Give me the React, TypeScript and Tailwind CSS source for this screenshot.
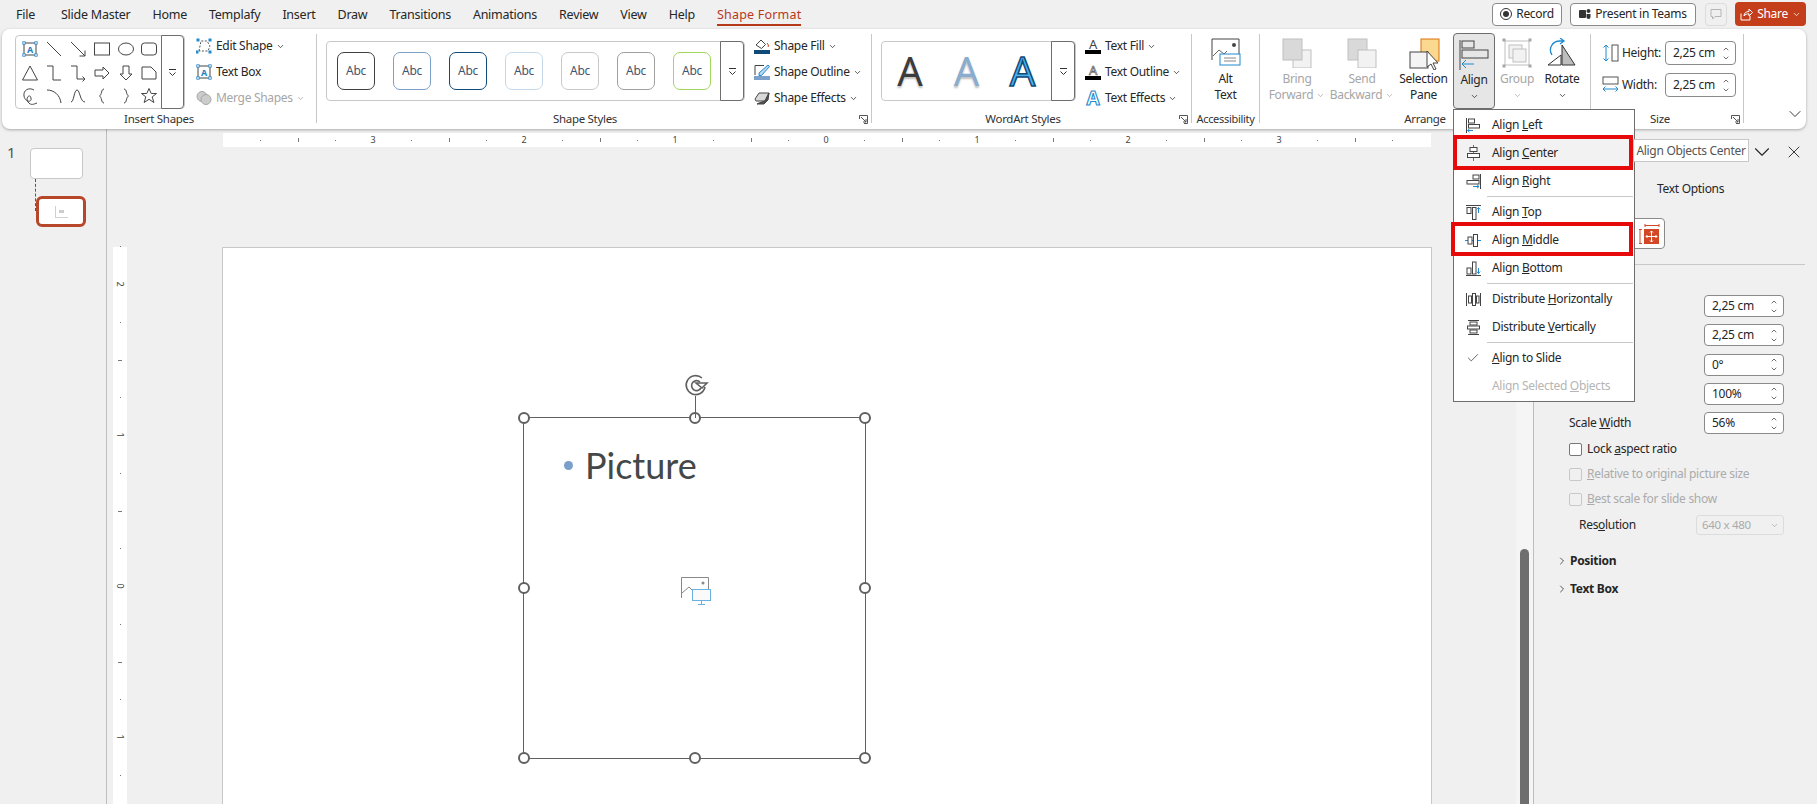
import { ChevronDown, ChevronRight, ChevronUp, Check, X } from 'lucide-react';
import type { ReactNode } from 'react';

const tabs = ['Slide Master', 'Home', 'Templafy', 'Insert', 'Draw', 'Transitions', 'Animations', 'Review', 'View', 'Help'];

const Small = ({ className = '' }: { className?: string }) => (
  <ChevronDown size={9} strokeWidth={2} className={`shrink-0 ${className}`} />
);

// shape gallery glyphs, 18x18 box
const shapes: ReactNode[] = [
  <g key="tb">
    <rect x="3" y="3" width="12" height="12" fill="none" stroke="#444" />
    <text x="9" y="13" fontSize="9" fontWeight="700" textAnchor="middle" fill="#1f7fc4" stroke="none">A</text>
    {[[3, 3], [15, 3], [3, 15], [15, 15]].map(([x, y]) => (
      <rect key={`${x}${y}`} x={x - 1.2} y={y - 1.2} width="2.4" height="2.4" fill="#fff" stroke="#1f7fc4" strokeWidth=".8" />
    ))}
  </g>,
  <path key="l" d="M2 2l14 14" />,
  <path key="a" d="M2 2l14 14M16 10.5V16h-5.5" />,
  <rect key="r" x="1.5" y="3" width="15" height="12" />,
  <ellipse key="e" cx="9" cy="9" rx="7.5" ry="6" />,
  <rect key="rr" x="1.5" y="3" width="15" height="12" rx="3" />,
  <path key="t" d="M9 2L1.5 16h15z" />,
  <path key="c" d="M2 2h6v14h8" />,
  <path key="ca" d="M2 2h6v13h8M13.5 12.5L16 15l-2.500 2.500" />,
  <path key="ra" d="M2 6h8V3l6 6-6 6v-3H2z" />,
  <path key="da" d="M6 2h6v8h3l-6 6-6-6h3z" />,
  <path key="sn" d="M2 3h9l5 5v7H2V3z" />,
  <path key="f" d="M13 3C8 0 2 3 3 9s8 7 7 2-6 0-3 4 6 2 9 1" />,
  <path key="ar" d="M2 3c7 0 13 5 14 13" />,
  <path key="s" d="M2 15C5 15 5 3 8 3s3 12 8 12" />,
  <path key="lb" d="M11 2C8 2 9 8 6.500 9 9 10 8 16 11 16" />,
  <path key="rb" d="M7 2c3 0 2 6 4.500 7C9 10 10 16 7 16" />,
  <path key="st" d="M9 1.500l2.200 5h5.300l-4.300 3.400 1.700 5.600L9 12.300l-4.900 3.200 1.700-5.600L1.500 6.500h5.300z" />,
];

const Group = ({ width, label, launcher, children, labelClass = '' }: { width: string; label: string; launcher?: boolean; children: ReactNode; labelClass?: string }) => (
  <>
    <div className={`flex flex-col pt-[6px] h-full shrink-0 ${width}`}>
      <div className="flex h-[76px] items-start">{children}</div>
      <div className={`relative h-[16px] leading-[16px] text-center text-[11.5px] text-[#333] ${labelClass}`}>
        {label}
        {launcher && (
          <svg width="9" height="9" viewBox="0 0 9 9" className="absolute right-[3px] top-[4px]" fill="none" stroke="#555">
            <path d="M.5 4V.5H8.500V8.500H5M2 2l5 5M7 4v3H4" />
          </svg>
        )}
      </div>
    </div>
    <div className="w-px h-[89px] mt-[5px] bg-[#c8c8c8] shrink-0" />
  </>
);

const MoreBtn = ({ width }: { width: string }) => (
  <div className={`flex items-center justify-center self-stretch -my-px border border-[#6e6e6e] rounded-r-[4px] bg-white ${width}`}>
    <svg width="9" height="9" viewBox="0 0 9 9" fill="none" stroke="#333">
      <path d="M1 1.500h7M1.500 4.500L4.500 7.500 7.500 4.500" />
    </svg>
  </div>
);

const CmdRow = ({ icon, label, disabled, caret = true }: { icon: ReactNode; label: string; disabled?: boolean; caret?: boolean }) => (
  <div className={`flex items-center h-[22px] ${disabled ? 'text-[#a6a6a6]' : 'text-[#262626]'}`}>
    <span className="w-[16px] h-[16px] mr-[4px] shrink-0">{icon}</span>
    <span className="whitespace-nowrap">{label}</span>
    {caret && <Small className="ml-[3px]" />}
  </div>
);

const BigBtn = ({ width, icon, lines, disabled, caret, active }: { width: string; icon: ReactNode; lines: ReactNode[]; disabled?: boolean; caret?: boolean; active?: boolean }) => (
  <div className={`flex flex-col items-center h-[76px] -mt-[2px] pt-[5px] shrink-0 leading-[16px] whitespace-nowrap rounded-[4px] ${width} ${disabled ? 'text-[#a6a6a6]' : 'text-[#262626]'} ${active ? 'bg-[#e6e6e6] border border-[#6e6e6e] pt-[4px]' : ''}`}>
    <div className="w-[30px] h-[28px] mb-[5px]">{icon}</div>
    {lines.map((line, i) => (
      <div key={i} className="flex items-center h-[16px]">{line}</div>
    ))}
    {caret && <div className="flex items-center h-[16px]"><Small /></div>}
  </div>
);

const Spin = ({ value, className = '' }: { value: string; className?: string }) => (
  <div className={`flex items-center justify-between h-[22px] border border-[#8a8a8a] rounded-[4px] bg-white pl-[7px] pr-[5px] text-[#262626] ${className}`}>
    <span>{value}</span>
    <span className="flex flex-col">
      <ChevronUp size={8} strokeWidth={2} />
      <ChevronDown size={8} strokeWidth={2} className="mt-[1px]" />
    </span>
  </div>
);

const I = ({ children }: { children: ReactNode }) => (
  <svg width="16" height="16" viewBox="0 0 16 16" fill="none" stroke="#444">{children}</svg>
);

const blue = '#1f8ad0';

const alignIcons: Record<string, ReactNode> = {
  left: <><path d="M1.500 1v15" stroke="#444" /><rect x="3.500" y="2" width="6" height="4" /><rect x="3.500" y="7.500" width="11" height="3.500" /><path d="M8 13.500H2.500M4.500 11.800l-2 1.700 2 1.700" stroke={blue} /></>,
  center: <><path d="M8.500 0v16" stroke={blue} /><rect x="5" y="2.500" width="7" height="4" fill="#fff" /><rect x="2.500" y="8.500" width="12" height="4" fill="#fff" /></>,
  right: <><path d="M15.500 1v15" stroke="#444" /><rect x="8" y="2" width="6" height="4" /><rect x="2" y="7.500" width="12" height="3.500" /><path d="M8 13.500h6M12 11.800l2 1.700-2 1.700" stroke={blue} /></>,
  top: <><path d="M1 1.500h15" /><rect x="2" y="3.500" width="4" height="6" /><rect x="7.500" y="3.500" width="3.500" height="12" /><path d="M13.500 9V3.500M11.800 5.500l1.700-2 1.700 2" stroke={blue} /></>,
  middle: <><path d="M0 8.500h16" stroke={blue} /><rect x="3" y="5" width="4" height="7" fill="#fff" /><rect x="8.500" y="2.500" width="4" height="12" fill="#fff" /></>,
  bottom: <><path d="M1 15.500h15" /><rect x="2" y="8" width="4" height="6" /><rect x="7.500" y="2" width="3.500" height="12" /><path d="M13.500 8v5.500M11.800 11.500l1.700 2 1.700-2" stroke={blue} /></>,
  dh: <><path d="M1.500 2v13M15.500 2v13" /><rect x="3.500" y="5" width="3" height="7" /><rect x="7.500" y="2.500" width="3" height="12" /><rect x="11.500" y="5" width="2.500" height="7" /></>,
  dv: <><path d="M3 1.500h11M3 15.500h11" /><rect x="5" y="3" width="7" height="3" /><rect x="2.500" y="7" width="12" height="3" /><rect x="5" y="11" width="7" height="3" /></>,
};

const menu: { icon?: string; label: ReactNode; sep?: boolean; checked?: boolean; disabled?: boolean; hover?: boolean }[] = [
  { icon: 'left', label: <>Align <u>L</u>eft</> },
  { icon: 'center', label: <>Align <u>C</u>enter</>, hover: true },
  { icon: 'right', label: <>Align <u>R</u>ight</>, sep: true },
  { icon: 'top', label: <>Align <u>T</u>op</> },
  { icon: 'middle', label: <>Align <u>M</u>iddle</> },
  { icon: 'bottom', label: <>Align <u>B</u>ottom</>, sep: true },
  { icon: 'dh', label: <>Distribute <u>H</u>orizontally</> },
  { icon: 'dv', label: <>Distribute <u>V</u>ertically</>, sep: true },
  { checked: true, label: <><u>A</u>lign to Slide</> },
  { disabled: true, label: <>Align Selected <u>O</u>bjects</> },
];

const abcColors = ['#404040', '#7ba0c9', '#0f4a78', '#c5d9ea', '#c9c9c9', '#a0a0a0', '#a3d65c'];

const rulerNums = [-3, -2, -1, 0, 1, 2, 3];
const rulerTicks = Array.from({ length: 33 }, (_, i) => (i - 16) / 4).filter((v) => v % 1 !== 0);

function TopRuler() {
  return (
    <div className="relative ml-[115px] w-[1208px] h-[14px] bg-white shrink-0 text-[9px] text-[#444]">
      {rulerNums.map((n) => (
        <span key={n} className="absolute top-0 leading-[14px] -translate-x-1/2" style={{ left: 603 + n * 151 }}>{Math.abs(n)}</span>
      ))}
      {rulerTicks.filter((v) => Math.abs(v) < 4).map((v) => (
        <span key={v} className={`absolute w-px bg-[#777] ${v % 0.5 === 0 ? 'top-[5px] h-[4px]' : 'top-[7px] h-[1px]'}`} style={{ left: 603 + v * 151 }} />
      ))}
    </div>
  );
}

function LeftRuler() {
  return (
    <div className="relative ml-[5px] w-[14px] h-[600px] bg-white shrink-0 text-[9px] text-[#444]">
      {[-2, -1, 0, 1].map((n) => (
        <span key={n} className="absolute left-0 w-[14px] text-center leading-[12px] -translate-y-1/2 rotate-90" style={{ top: 339 + n * 151 }}>{Math.abs(n)}</span>
      ))}
      {rulerTicks.filter((v) => v > -2.3 && v < 2).map((v) => (
        <span key={v} className={`absolute h-px bg-[#777] ${v % 0.5 === 0 ? 'left-[5px] w-[4px]' : 'left-[7px] w-[1px]'}`} style={{ top: 339 + v * 151 }} />
      ))}
    </div>
  );
}

const handles = [
  [0, 0], [50, 0], [100, 0],
  [0, 50], [100, 50],
  [0, 100], [50, 100], [100, 100],
];

function SlideCanvas() {
  return (
    <div className="relative ml-[95px] w-[1210px] h-[600px] bg-white border border-[#c8c8c8]">
      <div className="absolute left-[300px] top-[169px] w-[343px] h-[342px] border-[1.5px] border-[#606060]">
        <span className="absolute left-[40px] top-[43px] w-[9px] h-[9px] rounded-full bg-[#7a9fc8]" />
        <span className="absolute left-[61px] top-[20px] text-[36px] leading-[54px] tracking-normal text-[#444848] font-['Lato',sans-serif]">Picture</span>
        <svg className="absolute left-[157px] top-[159px]" width="31" height="28" viewBox="0 0 31 28" fill="none">
          <path d="M.5 21V.5h27V12M1 16l7-6 7 7" stroke="#888" />
          <circle cx="22" cy="6" r="1.500" fill="#888" />
          <rect x="11.500" y="12.500" width="18" height="11" fill="#fafafa" stroke="#68b1e0" />
          <path d="M20.500 24v3M17 27.500h7" stroke="#68b1e0" />
        </svg>
        {handles.map(([x, y]) => (
          <span
            key={`${x}-${y}`}
            className="absolute w-[12px] h-[12px] -translate-x-1/2 -translate-y-1/2 rounded-full bg-white border-2 border-[#606060]"
            style={{ left: `${x}%`, top: `${y}%` }}
          />
        ))}
        <span className="absolute left-1/2 -top-[22px] w-[1.5px] h-[22px] bg-[#606060]" />
        <svg className="absolute left-[159px] -top-[45px]" width="28" height="24" viewBox="0 0 28 24" fill="none" stroke="#606060" strokeWidth="1.600">
          <path d="M22 14A9.500 9.500 0 1 1 19 5" />
          <path d="M18 15a5 5 0 1 1-1-6" />
          <path d="M13 10h11l-5 5z" fill="#fff" />
        </svg>
      </div>
    </div>
  );
}

function FormatPanel() {
  // labels of the first four rows sit behind the open Align menu
  const rows = ['2,25 cm', '2,25 cm', '0°', '100%'];
  return (
    <div className="w-[284px] shrink-0 border-l border-[#bdbdbd] text-[#262626]">
      <div className="flex justify-end items-center h-[22px] mt-[12px] pr-[13px] gap-[9px]">
        <ChevronDown size={26} strokeWidth={1} />
        <X size={20} strokeWidth={1.100} />
      </div>
      <div className="ml-[123px] mt-[18px] leading-[16px] whitespace-nowrap">Text Options</div>
      <div className="flex ml-[100px] mt-[21px] w-[31px] h-[31px] items-center justify-center border border-[#8a8a8a] rounded-r-[4px] bg-white">
        <svg width="21" height="20" viewBox="0 0 21 20" fill="none">
          <path d="M6 1.500h14M6 0v3M20 0v3M1 6v13M0 5.500h3M0 19.500h3" stroke="#d24726" />
          <rect x="5" y="5" width="15" height="15" fill="#d24726" />
          <path d="M12.500 7v11M7 12.500h11M12.500 7l-1.500 1.500M12.500 7l1.500 1.500M12.500 18l-1.500-1.500M12.500 18l1.500-1.500M7 12.500L8.500 11M7 12.500L8.500 14M18 12.500L16.500 11M18 12.500L16.500 14" stroke="#fff" />
        </svg>
      </div>
      <div className="relative h-px mt-[15px] ml-[1px] mr-[12px] bg-[#c8c8c8]" />
      <div className="mt-[30px] flex flex-col gap-[7.250px]">
        {rows.map((value, i) => (
          <div key={i} className="flex items-center justify-end pr-[33px] h-[22px]">
            <Spin value={value} className="w-[80px]" />
          </div>
        ))}
        <div className="flex items-center justify-between pl-[35px] pr-[33px] h-[22px]">
          <span>Scale <u>W</u>idth</span>
          <Spin value="56%" className="w-[80px]" />
        </div>
      </div>
      <div className="flex items-center pl-[35px] h-[14px] mt-[8px] gap-[5px]">
        <span className="w-[13px] h-[13px] bg-white border border-[#777] rounded-[2px]" />
        <span>Lock <u>a</u>spect ratio</span>
      </div>
      <div className="flex items-center pl-[35px] h-[14px] mt-[11px] gap-[5px] text-[#ababab]">
        <span className="w-[13px] h-[13px] border border-[#c8c8c8] rounded-[2px]" />
        <span><u>R</u>elative to original picture size</span>
      </div>
      <div className="flex items-center pl-[35px] h-[14px] mt-[11px] gap-[5px] text-[#ababab]">
        <span className="w-[13px] h-[13px] border border-[#c8c8c8] rounded-[2px]" />
        <span><u>B</u>est scale for slide show</span>
      </div>
      <div className="flex items-center justify-between pl-[45px] pr-[33px] h-[20px] mt-[9px]">
        <span>Res<u>o</u>lution</span>
        <div className="flex items-center justify-between w-[88px] h-[20px] pl-[5px] pr-[4px] border border-[#dcdcdc] rounded-[3px] text-[#ababab] text-[11.500px]">
          640 x 480
          <Small />
        </div>
      </div>
      <div className="flex items-center h-[16px] pl-[22px] mt-[18px] font-bold">
        <ChevronRight size={12} strokeWidth={1.500} className="mr-[2px]" />
        Position
      </div>
      <div className="flex items-center h-[16px] pl-[22px] mt-[12px] font-bold">
        <ChevronRight size={12} strokeWidth={1.500} className="mr-[2px]" />
        Text Box
      </div>
    </div>
  );
}

function AlignMenu() {
  return (
    <div className="absolute left-[1453px] top-[109px] w-[182px] h-[293px] bg-white border border-[#6e6e6e] text-[#262626] z-20 pt-[1px]">
      {menu.map((m, i) => (
        <div key={i}>
          <div className={`flex items-center h-[28px] ${m.hover ? 'bg-[#f2f2f2]' : ''} ${m.disabled ? 'text-[#b5b5b5]' : ''}`}>
            <span className="flex justify-center items-center w-[38px] shrink-0">
              {m.icon && <I>{alignIcons[m.icon]}</I>}
              {m.checked && <Check size={14} strokeWidth={1.200} />}
            </span>
            <span className="whitespace-nowrap">{m.label}</span>
          </div>
          {m.sep && (
            <div className="ml-[33px] mr-[1px] h-[3px] flex items-center">
              <div className="h-px w-full bg-[#c8c8c8]" />
            </div>
          )}
        </div>
      ))}
      <div className="absolute -left-[1px] top-[25px] w-[180px] h-[35px] border-[4px] border-[#e60a0a]" />
      <div className="absolute -left-[3px] top-[112px] w-[182px] h-[34px] border-[4px] border-[#e60a0a]" />
    </div>
  );
}

export default function App() {
  return (
    <div className="relative w-[1817px] h-[804px] overflow-hidden bg-[#f0f0f0] text-[12px] tracking-[-0.3px] text-[#262626] font-['Noto_Sans',sans-serif]">
      {/* tab row */}
      <div className="flex items-start h-[29px]">
        <div className="flex pl-[16px] gap-[22px] h-[30px] items-center text-[12.500px] tracking-[-0.25px]">
          <span className="mr-[4px]">File</span>
          {tabs.map((t) => <span key={t}>{t}</span>)}
          <span className="relative text-[#b7391c] tracking-[0.2px]">
            Shape Format
            <span className="absolute left-0 right-0 -bottom-[2px] h-[2px] bg-[#b7391c]" />
          </span>
        </div>
        <div className="ml-auto flex items-center gap-[8px] pr-[11px] pt-[2px]">
          <div className="flex items-center h-[23px] w-[70px] justify-center border border-[#8a8a8a] rounded-[4px] bg-white gap-[4px]">
            <span className="flex items-center justify-center w-[12px] h-[12px] rounded-full border border-[#333]"><span className="w-[6px] h-[6px] rounded-full bg-[#333]" /></span>
            Record
          </div>
          <div className="flex items-center h-[23px] w-[126px] justify-center border border-[#8a8a8a] rounded-[4px] bg-white gap-[4px] whitespace-nowrap">
            <svg width="12" height="12" viewBox="0 0 12 12">
              <rect x="0" y="2" width="7" height="8" rx="1" fill="#333" />
              <circle cx="9.500" cy="3" r="2" fill="#333" />
              <path d="M7.500 6h4v3a2 2 0 0 1-4 0z" fill="#333" />
            </svg>
            Present in Teams
          </div>
          <div className="flex items-center justify-center h-[23px] w-[22px] ml-[1px] border border-[#dcdcdc] rounded-[4px]">
            <svg width="12" height="12" viewBox="0 0 12 12" fill="none" stroke="#b5b5b5"><path d="M1 1.500h10v7H5l-2.500 2.500V8.500H1z" /></svg>
          </div>
          <div className="flex items-center justify-center h-[24px] w-[71px] rounded-[4px] bg-[#c43e1c] text-white gap-[4px]">
            <svg width="13" height="13" viewBox="0 0 13 13" fill="none" stroke="#fff"><path d="M1 5.500V12h9V8M4 8c0-3 2-4.500 5-4.500V1l3.500 3.500L9 8V5.800C7 5.800 5 6.500 4 8z" /></svg>
            Share
            <Small />
          </div>
        </div>
      </div>

      {/* ribbon */}
      <div className="flex ml-[2px] w-[1804px] h-[100px] bg-white rounded-[8px] shadow-[0_1px_3px_rgba(0,0,0,0.3)] relative z-10">
        <Group width="w-[314px]" label="Insert Shapes">
          <div className="flex ml-[13px] h-[74px] w-[170px] border border-[#c8c8c8] rounded-[4px] bg-white">
            <div className="grid grid-cols-6 grid-rows-3 w-[147px] pl-[2px] pt-[1px]">
              {shapes.map((s, i) => (
                <div key={i} className="flex items-center justify-center w-[24px] h-[24px]">
                  <svg width="18" height="18" viewBox="0 0 18 18" fill="none" stroke="#444">{s}</svg>
                </div>
              ))}
            </div>
            <MoreBtn width="w-[23px] ml-auto" />
          </div>
          <div className="flex flex-col gap-[4px] ml-[11px]">
            <CmdRow label="Edit Shape" icon={
              <svg width="16" height="16" viewBox="0 0 16 16" fill="none"><path d="M3 13l2-10h6l3 5-2 5z" stroke="#555" strokeDasharray="2 1.500" />{[[2, 2], [14, 2], [1, 14], [14, 14]].map(([x, y]) => <rect key={`${x}${y}`} x={x - 1.500} y={y - 1.500} width="3" height="3" fill="#1f8ad0" />)}</svg>
            } />
            <CmdRow label="Text Box" caret={false} icon={
              <svg width="16" height="16" viewBox="0 0 16 16" fill="none"><rect x="2" y="2" width="12" height="12" stroke="#444" /><text x="8" y="12" fontSize="9" fontWeight="700" textAnchor="middle" fill="#1f7fc4">A</text>{[[2, 2], [14, 2], [2, 14], [14, 14]].map(([x, y]) => <rect key={`${x}${y}`} x={x - 1.200} y={y - 1.200} width="2.400" height="2.400" fill="#fff" stroke="#1f7fc4" strokeWidth=".8" />)}</svg>
            } />
            <CmdRow label="Merge Shapes" disabled icon={
              <svg width="16" height="16" viewBox="0 0 16 16" fill="#ccc" stroke="#a6a6a6"><circle cx="6" cy="6.500" r="5" /><circle cx="10" cy="9.500" r="5" /></svg>
            } />
          </div>
        </Group>

        <Group width="w-[554px]" label="Shape Styles" launcher labelClass="pr-[18px]">
          <div className="flex ml-[9px] mt-[6px] h-[60px] w-[419px] border border-[#c8c8c8] rounded-[4px] items-center">
            <div className="flex pl-[10px] gap-[18px] w-[394px]">
              {abcColors.map((c) => (
                <div key={c} className="flex items-center justify-center w-[38px] h-[38px] rounded-[7px] border-[1.500px] text-[12px] text-[#44546a] shrink-0" style={{ borderColor: c }}>Abc</div>
              ))}
            </div>
            <MoreBtn width="w-[24px] ml-auto" />
          </div>
          <div className="flex flex-col gap-[4px] ml-[9px]">
            <CmdRow label="Shape Fill" icon={
              <svg width="16" height="16" viewBox="0 0 16 16" fill="none" stroke="#444"><path d="M2 7l5-5 4.500 4.500-4 4z" /><path d="M13 5c1 1 2 3 1 4" stroke="#c43e1c" /><rect x="0" y="12" width="16" height="4" fill="#0f4a78" stroke="none" /></svg>
            } />
            <CmdRow label="Shape Outline" icon={
              <svg width="16" height="16" viewBox="0 0 16 16" fill="none"><path d="M1 11V1.500h9" stroke="#444" /><path d="M5 9l9-8 1.500 1.500-8 9H5z" fill="#bcd6ef" stroke="#1f8ad0" /><rect x="0" y="12" width="16" height="4" fill="#7ba0c9" /></svg>
            } />
            <CmdRow label="Shape Effects" icon={
              <svg width="16" height="16" viewBox="0 0 16 16" stroke="#444"><path d="M1 9l4-6h10l-4 8H2z" fill="#d9d9d9" /><path d="M5 13l6-2 4-8-1 7-4 4H3z" fill="#555" /></svg>
            } />
          </div>
        </Group>

        <Group width="w-[319px]" label="WordArt Styles" launcher labelClass="pr-[17px]">
          <div className="flex ml-[9px] mt-[6px] h-[60px] w-[195px] border border-[#c8c8c8] rounded-[4px] items-center">
            <div className="flex w-[171px] text-[40px] leading-[50px] tracking-normal">
              <span className="w-[56px] text-center text-[#3c3c3c] [text-shadow:0_2px_2px_rgba(0,0,0,0.25)]">A</span>
              <span className="w-[57px] text-center text-[#8aaccf] [text-shadow:0_2px_2px_rgba(0,0,0,0.25)]">A</span>
              <span className="w-[55px] text-center text-[#4cb2ec] [-webkit-text-stroke:1.500px_#0f4a78]">A</span>
            </div>
            <MoreBtn width="w-[24px] ml-auto" />
          </div>
          <div className="flex flex-col gap-[4px] ml-[9px]">
            <CmdRow label="Text Fill" icon={
              <span className="flex flex-col items-center">
                <span className="h-[12px] text-[13px] leading-[12px] text-[#444]">A</span>
                <span className="w-[16px] h-[4px] bg-black" />
              </span>
            } />
            <CmdRow label="Text Outline" icon={
              <span className="flex flex-col items-center">
                <span className="h-[12px] text-[13px] leading-[12px] text-white [-webkit-text-stroke:0.6px_#444]">A</span>
                <span className="w-[16px] h-[4px] bg-black" />
              </span>
            } />
            <CmdRow label="Text Effects" icon={
              <span className="flex justify-center h-[16px] text-[19px] leading-[16px] font-bold text-white [-webkit-text-stroke:1.100px_#1f8ad0]">A</span>
            } />
          </div>
        </Group>

        <Group width="w-[67px]" label="Accessibility" labelClass="text-[11px]">
          <BigBtn width="w-[67px]" lines={['Alt', 'Text']} icon={
            <svg width="30" height="28" viewBox="0 0 30 28" fill="none"><path d="M1 22V1h27v20" stroke="#444" /><path d="M2 18l6-6 5 4 3-3" stroke="#666" /><circle cx="23" cy="7" r="2" fill="#444" /><rect x="9" y="16" width="20" height="11" fill="#fff" stroke="#1f8ad0" /><path d="M13 20h12M13 23h12" stroke="#888" /></svg>
          } />
        </Group>

        <Group width="w-[330px]" label="Arrange" labelClass="pr-[0px]">
          <div className="w-[4px] shrink-0" />
          <BigBtn width="w-[66px]" disabled lines={['Bring', <>Forward <Small className="ml-[3px]" /></>]} icon={
            <svg width="30" height="30" viewBox="0 0 30 30"><rect x="11" y="12" width="18" height="18" fill="#f2f2f2" stroke="#bfbfbf" /><rect x="1" y="1" width="19" height="21" fill="#d9d9d9" stroke="#bfbfbf" /></svg>
          } />
          <BigBtn width="w-[64px]" disabled lines={['Send', <>Backward <Small className="ml-[3px]" /></>]} icon={
            <svg width="30" height="30" viewBox="0 0 30 30"><rect x="1" y="1" width="19" height="21" fill="#d9d9d9" stroke="#bfbfbf" /><rect x="11" y="12" width="18" height="18" fill="#f2f2f2" stroke="#bfbfbf" /></svg>
          } />
          <BigBtn width="w-[59px]" lines={['Selection', 'Pane']} icon={
            <svg width="32" height="32" viewBox="0 0 32 32"><rect x="12" y="1" width="18" height="22" fill="#fbd88f" stroke="#d9730d" /><rect x="1" y="14" width="18" height="16" fill="#f4f4f4" stroke="#444" /><path d="M18 13v16l4-3 3 6 2-1-3-6h5z" fill="#fff" stroke="#444" /></svg>
          } />
          <BigBtn width="w-[42px]" active caret lines={['Align']} icon={
            <svg width="30" height="32" viewBox="0 0 30 32" fill="none" stroke="#444"><path d="M1 1v30" /><rect x="3" y="2" width="12" height="7" /><rect x="3" y="11" width="26" height="8" /><path d="M15 25H3M7 21l-4 4 4 4" stroke="#1f8ad0" /></svg>
          } />
          <BigBtn width="w-[44px]" disabled caret lines={['Group']} icon={
            <svg width="30" height="30" viewBox="0 0 30 30" fill="#f2f2f2" stroke="#bfbfbf"><path d="M3 3h24v24H3z" fill="none" /><rect x="7" y="7" width="13" height="13" /><rect x="11" y="11" width="13" height="13" />{[[2, 2], [28, 2], [2, 28], [28, 28]].map(([x, y]) => <rect key={`${x}${y}`} x={x - 1.500} y={y - 1.500} width="3" height="3" fill="#a6a6a6" stroke="none" />)}</svg>
          } />
          <BigBtn width="w-[46px]" caret lines={['Rotate']} icon={
            <svg width="30" height="30" viewBox="0 0 30 30" fill="none"><path d="M5 17C1 11 5 3 13 3h3M13 0l4 3-4 3" stroke="#1f8ad0" strokeWidth="1.300" /><path d="M1 27l13-10v10z" fill="#fff" stroke="#333" /><path d="M15 27V7l13 20z" fill="#bdbdbd" stroke="#333" /></svg>
          } />
        </Group>

        <Group width="w-[152px]" label="Size" launcher labelClass="pr-[14px]">
          <div className="flex flex-col gap-[8px] mt-[6px] pl-[11px]">
            <div className="flex items-center w-[134px] justify-between">
              <div className="flex items-center gap-[3px]">
                <svg width="17" height="18" viewBox="0 0 17 18" fill="none"><path d="M4 1v16M1.500 3.500L4 1l2.500 2.500M1.500 14.500L4 17l2.500-2.500" stroke="#1f8ad0" /><rect x="10" y="1" width="6" height="16" stroke="#555" /></svg>
                Height:
              </div>
              <Spin value="2,25 cm" className="w-[71px] h-[24px] pl-[3px]" />
            </div>
            <div className="flex items-center w-[134px] justify-between">
              <div className="flex items-center gap-[3px]">
                <svg width="17" height="18" viewBox="0 0 17 18" fill="none"><rect x="1" y="1" width="15" height="7" stroke="#555" /><path d="M1 13h15M3.500 10.500L1 13l2.500 2.500M13.500 10.500L16 13l-2.500 2.500" stroke="#1f8ad0" /></svg>
                Width:
              </div>
              <Spin value="2,25 cm" className="w-[71px] h-[24px] pl-[3px]" />
            </div>
          </div>
        </Group>

        <div className="flex-1 flex items-end justify-end pr-[1px] pb-[5px]">
          <ChevronDown size={20} strokeWidth={1.100} />
        </div>
      </div>

      {/* work area */}
      <div className="flex h-[675px] overflow-hidden">
        <div className="relative w-[107px] shrink-0 border-r border-[#bdbdbd]">
          <span className="absolute left-[7px] top-[12px] text-[15px] text-[#555]">1</span>
          <div className="absolute left-[30px] top-[19px] w-[53px] h-[31px] bg-white rounded-[4px] border border-[#c8c8c8]" />
          <div className="absolute left-[35px] top-[50px] h-[32px] border-l border-dashed border-[#555]" />
          <div className="absolute left-[36px] top-[67px] w-[50px] h-[31px] flex items-center justify-center bg-white rounded-[6px] border-[3px] border-[#b7472a]">
            <div className="w-[13px] h-[12px] border-l border-b border-[#d0d0d0] flex items-center justify-center"><span className="w-[5px] h-[3px] bg-[#ccc]" /></div>
          </div>
        </div>

        <div className="flex flex-col flex-1 min-w-0 pt-[4px] pl-[1px]">
          <TopRuler />
          <div className="flex items-start mt-[100px]">
            <LeftRuler />
            <SlideCanvas />
          </div>
        </div>

        <div className="w-[17px] shrink-0 bg-[#f5f5f5] flex flex-col px-[4px] pt-[420px]">
          <div className="flex-1 rounded-t-[5px] bg-[#6e6e6e]" />
        </div>

        <FormatPanel />
      </div>

      <AlignMenu />

      <div className="absolute left-[1633px] top-[139px] flex items-center justify-center w-[116px] h-[23px] bg-white border border-[#c8c8c8] text-[#555] z-30 whitespace-nowrap">
        Align Objects Center
      </div>
    </div>
  );
}
